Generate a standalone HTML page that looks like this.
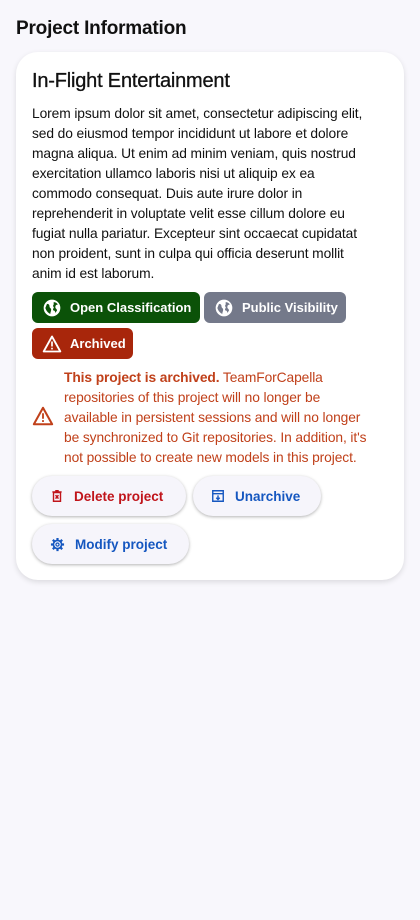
<!DOCTYPE html>
<html><head><style>
body{margin:0;width:420px;height:920px;background:#f8f7fc;font-family:"Liberation Sans",sans-serif;color:#111;}
h1{position:absolute;left:16px;top:18px;margin:0;font-size:19px;font-weight:bold;letter-spacing:-0.2px;}
.card{position:absolute;left:16px;top:52px;width:388px;height:528px;background:#fff;border-radius:22px;box-shadow:0 2px 6px rgba(0,0,0,.12);}
h2{position:absolute;left:16px;top:18px;margin:0;font-size:20px;font-weight:normal;letter-spacing:-0.2px;-webkit-text-stroke:0.3px #111;}
.desc{position:absolute;left:16px;top:52px;font-size:13.8px;line-height:20px;white-space:nowrap;letter-spacing:-0.1px;}
.badge{position:absolute;height:31px;border-radius:6px;color:#fff;font-size:13px;font-weight:bold;display:flex;align-items:center;box-sizing:border-box;padding-left:10px;white-space:nowrap;}
.badge svg{margin-right:8px;}
.warn{position:absolute;left:48px;top:316px;font-size:13.8px;line-height:20px;color:#c0401a;white-space:nowrap;letter-spacing:-0.1px;}
.btn{position:absolute;height:40px;border-radius:20px;background:#f6f5fb;box-shadow:0 1px 3px rgba(0,0,0,.3);display:flex;align-items:center;font-size:13.5px;font-weight:bold;box-sizing:border-box;padding-left:18px;white-space:nowrap;}
.btn svg{margin-right:10px;}
</style></head><body>
<h1>Project Information</h1>
<div class="card">
<h2>In-Flight Entertainment</h2>
<div class="desc">Lorem ipsum dolor sit amet, consectetur adipiscing elit,<br>sed do eiusmod tempor incididunt ut labore et dolore<br>magna aliqua. Ut enim ad minim veniam, quis nostrud<br>exercitation ullamco laboris nisi ut aliquip ex ea<br>commodo consequat. Duis aute irure dolor in<br>reprehenderit in voluptate velit esse cillum dolore eu<br>fugiat nulla pariatur. Excepteur sint occaecat cupidatat<br>non proident, sunt in culpa qui officia deserunt mollit<br>anim id est laborum.</div>
<div class="badge" style="left:16px;top:240px;width:168px;background:#0b5208;"><svg width="20" height="20" viewBox="0 0 24 24"><circle cx="12" cy="12" r="10" fill="#fff"/><path d="M6 7c2 0 3 1 3 3s2 2 2 4-1 3-1 5c-3-1-5-4-6-7zM14 5c2 0 4 1 5 3-2 0-3 1-3 3 0 2 2 2 2 4l-2 3c0-2-1-3-2-3s-1-2 0-3-2-2 0-4z" fill="#0b5208"/></svg>Open Classification</div>
<div class="badge" style="left:188px;top:240px;width:142px;background:#74798a;"><svg width="20" height="20" viewBox="0 0 24 24"><circle cx="12" cy="12" r="10" fill="#fff"/><path d="M6 7c2 0 3 1 3 3s2 2 2 4-1 3-1 5c-3-1-5-4-6-7zM14 5c2 0 4 1 5 3-2 0-3 1-3 3 0 2 2 2 2 4l-2 3c0-2-1-3-2-3s-1-2 0-3-2-2 0-4z" fill="#74798a"/></svg>Public Visibility</div>
<div class="badge" style="left:16px;top:276px;width:101px;background:#a8260b;"><svg width="20" height="20" viewBox="0 0 24 24"><path d="M12 3L2 21h20z" fill="none" stroke="#fff" stroke-width="2.2" stroke-linejoin="round"/><rect x="11" y="9" width="2" height="6" fill="#fff"/><rect x="11" y="16.5" width="2" height="2" fill="#fff"/></svg>Archived</div>
<svg style="position:absolute;left:16px;top:353px" width="22" height="22" viewBox="0 0 24 24"><path d="M12 3L2 21h20z" fill="none" stroke="#c0401a" stroke-width="2.2" stroke-linejoin="round"/><rect x="11" y="9" width="2" height="6" fill="#c0401a"/><rect x="11" y="16.5" width="2" height="2" fill="#c0401a"/></svg>
<div class="warn"><b>This project is archived.</b> TeamForCapella<br>repositories of this project will no longer be<br>available in persistent sessions and will no longer<br>be synchronized to Git repositories. In addition, it's<br>not possible to create new models in this project.</div>
<div class="btn" style="left:16px;top:424px;width:154px;color:#c0141a;"><svg width="14" height="14" viewBox="0 0 24 24"><path d="M6 6h12v15H6zM4 5h16M9 3h6M9.5 10.5l5 6M14.5 10.5l-5 6" fill="none" stroke="#c0141a" stroke-width="2.4"/></svg>Delete project</div>
<div class="btn" style="left:177px;top:424px;width:128px;color:#1557c0;"><svg width="14" height="14" viewBox="0 0 24 24"><path d="M3 3h18v18H3zM3 8h18M12 11v7M9 15l3 3 3-3" fill="none" stroke="#1557c0" stroke-width="2.4"/></svg>Unarchive</div>
<div class="btn" style="left:16px;top:472px;width:157px;color:#1557c0;"><svg width="15" height="15" viewBox="0 0 24 24"><path d="M12 1.5v4M12 18.5v4M1.5 12h4M18.5 12h4M4.5 4.5l3 3M16.5 16.5l3 3M4.5 19.5l3-3M16.5 7.5l3-3" stroke="#1557c0" stroke-width="3.5"/><circle cx="12" cy="12" r="6.5" fill="none" stroke="#1557c0" stroke-width="2.6"/><circle cx="12" cy="12" r="2.5" fill="none" stroke="#1557c0" stroke-width="2"/></svg>Modify project</div>
</div>
</body></html>
